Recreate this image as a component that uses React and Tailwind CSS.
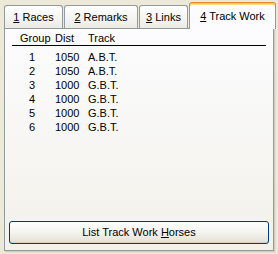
import React from 'react';

const rows = [
  { group: '1', dist: '1050', track: 'A.B.T.' },
  { group: '2', dist: '1050', track: 'A.B.T.' },
  { group: '3', dist: '1000', track: 'G.B.T.' },
  { group: '4', dist: '1000', track: 'G.B.T.' },
  { group: '5', dist: '1000', track: 'G.B.T.' },
  { group: '6', dist: '1000', track: 'G.B.T.' },
];

const tabs = [
  { key: '1', label: ' Races', width: 'w-[59px]' },
  { key: '2', label: ' Remarks', width: 'w-[74px]' },
  { key: '3', label: ' Links', width: 'w-[49px]' },
];

const Tab = ({ tab }) => (
  <div
    className={`${tab.width} h-[23px] mr-px flex items-center justify-center border border-b-0 border-[#919B9C] rounded-t-[3px] bg-linear-to-b from-white to-[#ECEBE6]`}
  >
    <span>
      <u>{tab.key}</u>
      {tab.label}
    </span>
  </div>
);

const App = () => {
  return (
    <div
      className="w-[278px] h-[254px] bg-[#ECE9D8] pt-[2px] pl-[4px] pb-[3px] flex flex-col text-[11px] text-black"
      style={{ fontFamily: '"Liberation Sans", Arial, sans-serif' }}
    >
      {/* tab strip */}
      <div className="flex items-end h-[26px]">
        {tabs.map((tab) => (
          <Tab key={tab.key} tab={tab} />
        ))}
        <div className="relative z-10 w-[87px] h-[27px] -mb-px flex items-center justify-center border border-b-0 border-[#919B9C] border-t-[#E68B2C] rounded-t-[3px] bg-[#FCFCFE] shadow-[inset_0_1px_0_#FFC73C,inset_0_2px_0_#FFD98A] pt-[1px]">
          <span>
            <u>4</u> Track Work
          </span>
        </div>
      </div>

      {/* page */}
      <div className="w-[270px] flex-1 border border-[#919B9C] bg-linear-to-b from-[#FCFCFE] to-[#F2F1EA] shadow-[1px_1px_0_#D0CEBF,2px_2px_0_#E2DFCF] flex flex-col px-[7px]">
        <div className="mt-[3px] flex h-[14px] leading-[13px] border-b border-black">
          <span className="w-[43px] pl-[8px]">Group</span>
          <span className="w-[33px]">Dist</span>
          <span>Track</span>
        </div>
        <div className="mt-[4px] flex flex-col">
          {rows.map((r) => (
            <div key={r.group} className="flex h-[14px] leading-[14px]">
              <span className="w-[43px] pr-[20px] text-right">{r.group}</span>
              <span className="w-[33px] pr-[14px] text-right">{r.dist}</span>
              <span>{r.track}</span>
            </div>
          ))}
        </div>

        <div className="flex-1" />

        <button className="mx-[-3px] mb-[6px] h-[23px] border border-[#003C74] rounded-[3px] bg-linear-to-b from-white via-[#F4F3EE] to-[#E3E0D6] shadow-[inset_0_-1px_0_#D6D0C5] flex items-center justify-center">
          <span>
            List Track Work <u>H</u>orses
          </span>
        </button>
      </div>
    </div>
  );
};

export default App;
